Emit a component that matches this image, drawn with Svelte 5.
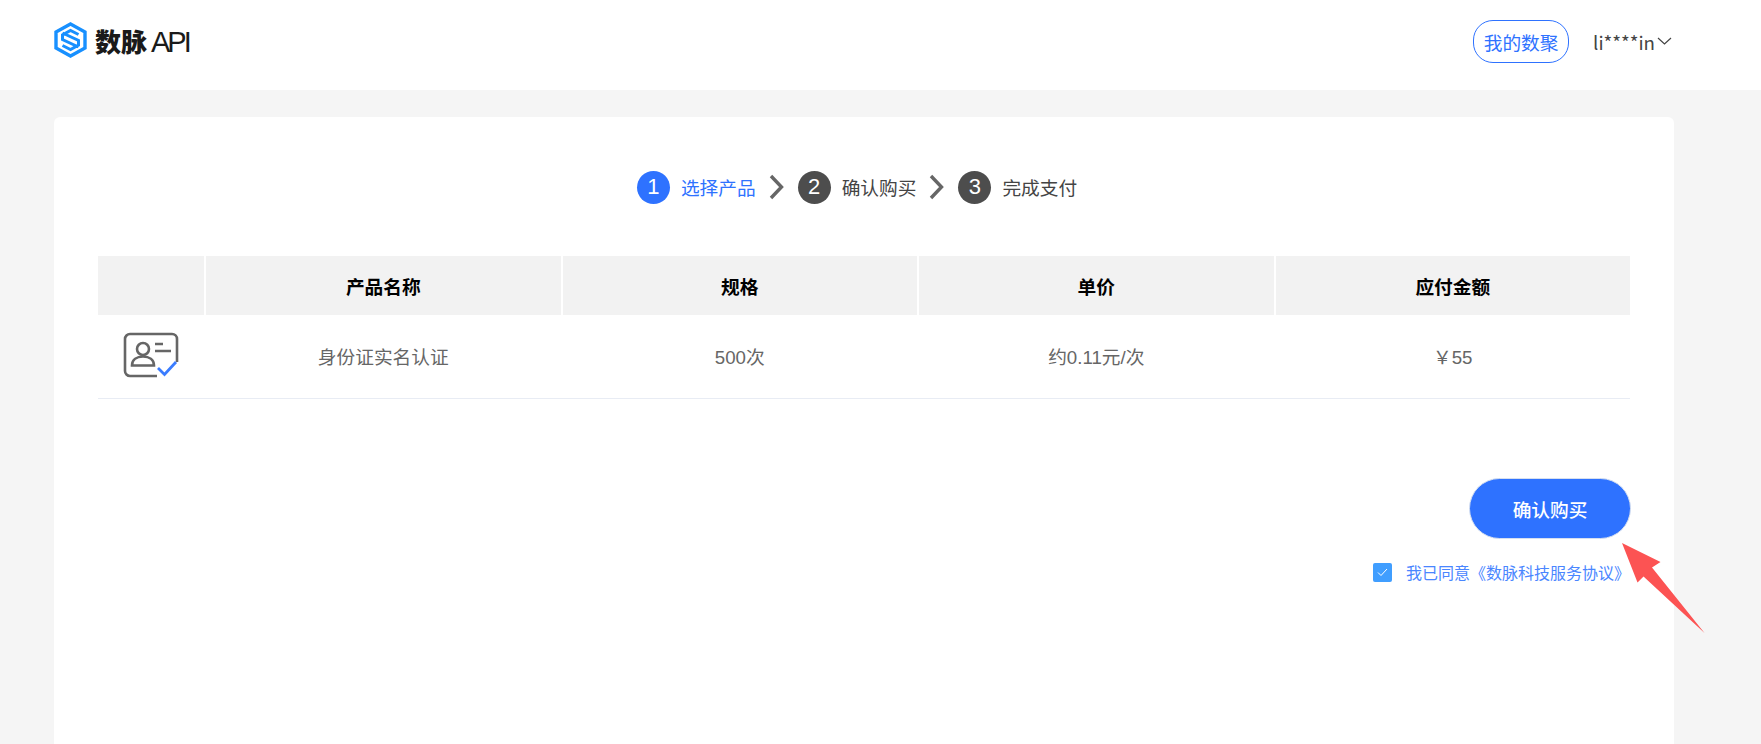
<script>
  const columns = ["产品名称", "规格", "单价", "应付金额"];
  const cells = ["身份证实名认证", "500次", "约0.11元/次", "￥55"];
  const steps = [
    { num: 1, label: "选择产品", active: true },
    { num: 2, label: "确认购买", active: false },
    { num: 3, label: "完成支付", active: false },
  ];
</script>

<div class="page">
  <header class="topbar">
    <div class="logo">
      <svg class="logo-mark" width="33" height="36" viewBox="0 0 33 36" fill="none">
        <path d="M16.5 2 31 10v16L16.5 34 2 26V10Z" stroke="#1890ff" stroke-width="3.400" />
        <path d="M24.500 12.500 16.500 8.500 8.500 13v4.500L24.500 25M8.500 23.500 16.500 27.500 24.500 23v-4.500L8.500 11" stroke="#1890ff" stroke-width="3" />
      </svg>
      <span class="logo-text">数脉<span class="logo-api">API</span></span>
    </div>
    <div class="account">
      <a class="my-data" href="#top">我的数聚</a>
      <span class="user">li****in</span>
      <svg width="15" height="8" viewBox="0 0 15 8" fill="none">
        <path d="M1 1l6.500 6L14 1" stroke="#444" stroke-width="1.200" />
      </svg>
    </div>
  </header>

  <main class="card">
    <div class="steps">
      {#each steps as step, i}
        {#if i > 0}
          <svg class="chevron" width="15" height="26" viewBox="0 0 15 26" fill="none">
            <path d="M2 2l10.500 11L2 24" stroke="#666" stroke-width="3.400" />
          </svg>
        {/if}
        <span class="step-num" class:active={step.active}>{step.num}</span>
        <span class="step-label" class:active={step.active}>{step.label}</span>
      {/each}
    </div>

    <div class="table">
      <div class="thead">
        <div class="th"></div>
        {#each columns as col}
          <div class="th">{col}</div>
        {/each}
      </div>
      <div class="tbody">
        <div class="td">
          <svg class="id-icon" width="56" height="46" viewBox="0 0 56 46" fill="none">
            <path d="M34 44H7a5 5 0 0 1-5-5V7a5 5 0 0 1 5-5h42a5 5 0 0 1 5 5v23" stroke="#666" stroke-width="2.600" />
            <circle cx="20" cy="17" r="6" stroke="#666" stroke-width="2.600" />
            <path d="M9 33.500c0-6 5-9 11-9s11 3 11 9Z" stroke="#666" stroke-width="2.600" />
            <path d="M32 12h8M32 19h16" stroke="#666" stroke-width="2.600" />
            <path d="M35 36l6.500 6.500L53 30" stroke="#3a7cff" stroke-width="2.800" />
          </svg>
        </div>
        {#each cells as cell}
          <div class="td">{cell}</div>
        {/each}
      </div>
    </div>

    <div class="actions">
      <button class="confirm" type="button">确认购买</button>
      <div class="agree">
        <span class="checkbox">
          <svg width="11" height="9" viewBox="0 0 11 9" fill="none">
            <path d="M1 4.500 4 7.500 10 1" stroke="#fff" stroke-width="1" />
          </svg>
        </span>
        <span class="agree-text">我已同意《数脉科技服务协议》</span>
      </div>
      <svg class="pointer" width="84" height="92" viewBox="0 0 84 92">
        <path d="M0 0 38.500 19 30 24.500 82.500 90 21.500 33.500 15.500 39.500Z" fill="#fc5353" />
      </svg>
    </div>
  </main>
</div>

<style>
  :global(body) {
    margin: 0;
    background: #f5f5f5;
    font-family: "Liberation Sans", "Noto Sans CJK SC", sans-serif;
  }

  .page {
    height: 744px;
    overflow: hidden;
  }

  .topbar {
    height: 90px;
    background: #fff;
    display: flex;
    align-items: center;
    justify-content: space-between;
    padding: 0 89px 0 54px;
    box-sizing: border-box;
  }

  .logo {
    display: flex;
    align-items: center;
    gap: 8px;
    margin-top: -10px;
  }

  .logo-text {
    font-size: 26px;
    font-weight: 900;
    color: #1a1a1a;
    white-space: nowrap;
  }

  .logo-api {
    font-size: 29px;
    font-weight: 400;
    letter-spacing: -3px;
    margin-left: 4px;
  }

  .account {
    display: flex;
    align-items: center;
    margin-top: -8px;
    color: #444;
    font-size: 18.7px;
  }

  .my-data {
    width: 96px;
    height: 43px;
    box-sizing: border-box;
    border: 1px solid #2e72ff;
    border-radius: 20px;
    color: #2e72ff;
    display: flex;
    align-items: center;
    justify-content: center;
    text-decoration: none;
    margin-right: 24px;
  }

  .user {
    font-family: "Noto Sans CJK SC", sans-serif;
    font-size: 18.7px;
    margin-right: 2px;
  }

  .card {
    margin: 27px 87px 0 54px;
    height: 700px;
    background: #fff;
    border-radius: 6px;
    padding: 0 44px;
  }

  .steps {
    display: flex;
    align-items: center;
    justify-content: center;
    height: 34px;
    padding-top: 53px;
    padding-right: 14px;
    padding-bottom: 1px;
    color: #444;
    font-size: 18.7px;
  }

  .step-num {
    width: 33px;
    height: 33px;
    border-radius: 50%;
    background: #4d4d4d;
    color: #fff;
    display: flex;
    align-items: center;
    justify-content: center;
    font-size: 22px;
    margin-right: 11px;
  }

  .step-num.active {
    background: #2e72ff;
  }

  .step-label {
    margin-bottom: 2px;
  }

  .step-label.active {
    color: #2e72ff;
  }

  .chevron {
    margin: 0 14px 0 13px;
  }

  .table {
    margin-top: 51px;
  }

  .thead,
  .tbody {
    display: grid;
    grid-template-columns: 106px repeat(4, 1fr);
    column-gap: 2px;
  }

  .th {
    height: 59px;
    background: #f2f2f2;
    display: flex;
    align-items: center;
    justify-content: center;
    font-size: 18.7px;
    font-weight: 700;
    color: #000;
  }

  .tbody {
    height: 84px;
    box-sizing: border-box;
    border-bottom: 1px solid #e8ecf4;
  }

  .id-icon {
    margin-top: -2px;
  }

  .td {
    display: flex;
    align-items: center;
    justify-content: center;
    padding-bottom: 2px;
    font-size: 18.7px;
    color: #666;
  }

  .actions {
    position: relative;
    display: flex;
    flex-direction: column;
    align-items: flex-end;
    margin-top: 79px;
  }

  .confirm {
    width: 162px;
    height: 61px;
    margin-right: -1px;
    border: 1px solid #d5dff0;
    border-radius: 31px;
    background: #2e72ff;
    color: #fff;
    font: inherit;
    font-size: 18.7px;
    font-weight: 500;
  }

  .agree {
    display: flex;
    align-items: center;
    margin-top: 21px;
  }

  .checkbox {
    width: 19px;
    height: 19px;
    border-radius: 2px;
    background: #409eff;
    display: flex;
    align-items: center;
    justify-content: center;
    margin-right: 14px;
  }

  .agree-text {
    color: #4a86ff;
    font-size: 16px;
  }

  .pointer {
    position: absolute;
    left: 1524px;
    top: 65px;
  }
</style>
